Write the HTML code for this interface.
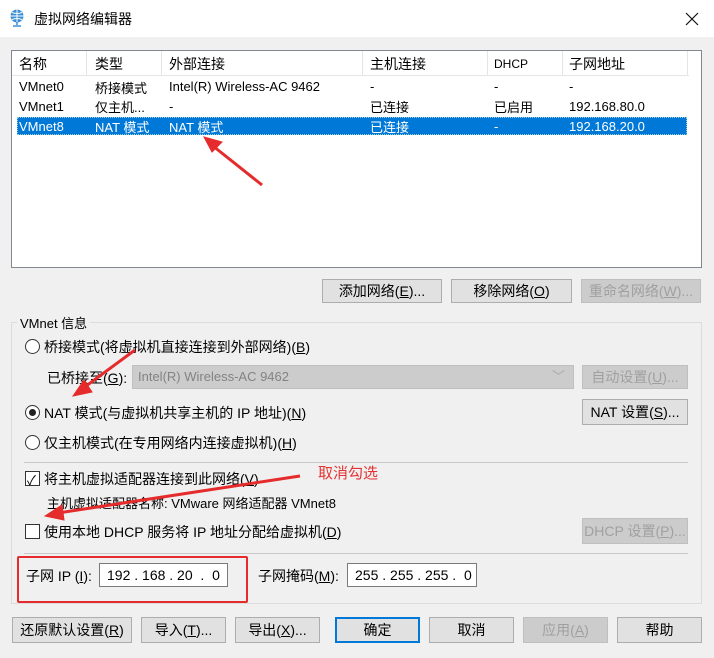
<!DOCTYPE html><html><head><meta charset="utf-8"><style>
body{margin:0;width:714px;height:658px;background:#f0f0f0;font-family:"Liberation Sans","Noto Sans CJK SC",sans-serif;font-size:13px;color:#000;position:relative;overflow:hidden}
.a{position:absolute;white-space:nowrap}
.btn{position:absolute;height:24px;background:#e1e1e1;border:1px solid #adadad;box-sizing:border-box;text-align:center;line-height:22px;font-size:14px}
.dis{color:#a0a0a0;background:#ccc;border-color:#bfbfbf}
.rad{position:absolute;width:13px;height:13px;border:1px solid #333;border-radius:50%;background:#fff}
.chk{position:absolute;width:13px;height:13px;border:1px solid #333;background:#fff}
.t{font-size:14px}
u{text-decoration:underline}
.inp{position:absolute;height:24px;background:#fff;border:1px solid #7a7a7a;box-sizing:border-box;line-height:22px;padding-left:7px;font-size:14px}
</style></head><body>
<div class="a" style="left:0;top:0;width:714px;height:37px;background:#fff"></div>
<svg class="a" style="left:9px;top:9px" width="16" height="18" viewBox="0 0 16 18"><circle cx="8" cy="7" r="6.5" fill="#3a8fd6"/><path d="M1.5 7h13M8 .5v13M3 3.5q5 2 10 0M3 10.5q5-2 10 0" stroke="#fff" stroke-width="1" fill="none"/><path d="M8 13v3M4 17h8" stroke="#3a8fd6" stroke-width="1.5"/></svg>
<div class="a t" style="left:34px;top:9px">虚拟网络编辑器</div>
<svg class="a" style="left:685px;top:12px" width="14" height="14"><path d="M1 1L13 13M13 1L1 13" stroke="#111" stroke-width="1.2"/></svg>
<div class="a" style="left:11px;top:50px;width:691px;height:218px;background:#fff;border:1px solid #828790;box-sizing:border-box"></div>
<div class="a" style="left:12px;top:51px;width:677px;height:24px;border-bottom:1px solid #e5e5e5"></div>
<div class="a" style="left:86px;top:51px;width:1px;height:24px;background:#e5e5e5"></div>
<div class="a" style="left:161px;top:51px;width:1px;height:24px;background:#e5e5e5"></div>
<div class="a" style="left:362px;top:51px;width:1px;height:24px;background:#e5e5e5"></div>
<div class="a" style="left:487px;top:51px;width:1px;height:24px;background:#e5e5e5"></div>
<div class="a" style="left:562px;top:51px;width:1px;height:24px;background:#e5e5e5"></div>
<div class="a" style="left:687px;top:51px;width:1px;height:24px;background:#e5e5e5"></div>
<div class="a t" style="left:19px;top:54px">名称</div><div class="a t" style="left:95px;top:54px">类型</div><div class="a t" style="left:169px;top:54px">外部连接</div><div class="a t" style="left:370px;top:54px">主机连接</div><div class="a" style="left:494px;top:57px;font-size:12px">DHCP</div><div class="a t" style="left:569px;top:54px">子网地址</div>
<div class="a" style="left:19px;top:79px">VMnet0</div><div class="a" style="left:95px;top:78px">桥接模式</div><div class="a" style="left:169px;top:79px">Intel(R) Wireless-AC 9462</div><div class="a" style="left:370px;top:79px">-</div><div class="a" style="left:494px;top:79px">-</div><div class="a" style="left:569px;top:79px">-</div>
<div class="a" style="left:19px;top:99px">VMnet1</div><div class="a" style="left:95px;top:97px">仅主机...</div><div class="a" style="left:169px;top:99px">-</div><div class="a" style="left:370px;top:97px">已连接</div><div class="a" style="left:494px;top:97px">已启用</div><div class="a" style="left:569px;top:99px">192.168.80.0</div>
<div class="a" style="left:17px;top:117px;width:670px;height:18px;background:#0078d7;border:1px dotted #9cc;box-sizing:border-box"></div>
<div class="a" style="left:19px;top:119px;color:#fff">VMnet8</div><div class="a" style="left:95px;top:117px;color:#fff">NAT 模式</div><div class="a" style="left:169px;top:117px;color:#fff">NAT 模式</div><div class="a" style="left:370px;top:117px;color:#fff">已连接</div><div class="a" style="left:494px;top:119px;color:#fff">-</div><div class="a" style="left:569px;top:119px;color:#fff">192.168.20.0</div>
<div class="btn" style="left:322px;top:279px;width:120px">添加网络(<u>E</u>)...</div>
<div class="btn" style="left:451px;top:279px;width:121px">移除网络(<u>O</u>)</div>
<div class="btn dis" style="left:581px;top:279px;width:120px">重命名网络(<u>W</u>)...</div>
<div class="a" style="left:11px;top:322px;width:691px;height:282px;border:1px solid #dcdcdc;box-sizing:border-box"></div>
<div class="a" style="left:17px;top:313px;background:#f0f0f0;padding:0 3px">VMnet 信息</div>
<div class="rad" style="left:25px;top:339px"></div><div class="a t" style="left:44px;top:337px">桥接模式(将虚拟机直接连接到外部网络)(<u>B</u>)</div>
<div class="a t" style="left:47px;top:368px">已桥接至(<u>G</u>):</div>
<div class="a" style="left:132px;top:365px;width:442px;height:24px;background:#ccc;border:1px solid #bfbfbf;box-sizing:border-box;color:#838383;line-height:22px;padding-left:5px">Intel(R) Wireless-AC 9462<span style="position:absolute;right:8px;color:#aaa">﹀</span></div>
<div class="btn dis" style="left:582px;top:365px;width:106px">自动设置(<u>U</u>)...</div>
<div class="rad" style="left:25px;top:405px"></div><div class="a" style="left:29px;top:409px;width:7px;height:7px;border-radius:50%;background:#222"></div><div class="a t" style="left:44px;top:403px">NAT 模式(与虚拟机共享主机的 IP 地址)(<u>N</u>)</div>
<div class="btn" style="left:582px;top:399px;width:106px;height:26px;line-height:24px">NAT 设置(<u>S</u>)...</div>
<div class="rad" style="left:25px;top:435px"></div><div class="a t" style="left:44px;top:433px">仅主机模式(在专用网络内连接虚拟机)(<u>H</u>)</div>
<div class="a" style="left:24px;top:462px;width:664px;height:1px;background:#c8c8c8"></div>
<div class="chk" style="left:25px;top:471px"></div><div class="a" style="left:27px;top:470px;font-size:13px">✓</div><div class="a t" style="left:44px;top:469px">将主机虚拟适配器连接到此网络(<u>V</u>)</div>
<div class="a" style="left:47px;top:493px">主机虚拟适配器名称: VMware 网络适配器 VMnet8</div>
<div class="chk" style="left:25px;top:524px"></div><div class="a t" style="left:44px;top:522px">使用本地 DHCP 服务将 IP 地址分配给虚拟机(<u>D</u>)</div>
<div class="btn dis" style="left:582px;top:518px;width:106px;height:26px;line-height:24px">DHCP 设置(<u>P</u>)...</div>
<div class="a" style="left:24px;top:553px;width:664px;height:1px;background:#c8c8c8"></div>
<div class="a t" style="left:26px;top:566px">子网 IP (<u>I</u>):</div>
<div class="inp" style="left:99px;top:563px;width:129px">192 . 168 . 20 &nbsp;. &nbsp;0</div>
<div class="a t" style="left:258px;top:566px">子网掩码(<u>M</u>):</div>
<div class="inp" style="left:347px;top:563px;width:130px">255 . 255 . 255 . &nbsp;0</div>
<div class="a" style="left:17px;top:556px;width:231px;height:47px;border:2px solid #e52b2b;box-sizing:border-box;border-radius:2px"></div>
<div class="a" style="left:318px;top:462px;color:#e53333;font-size:15px">取消勾选</div>
<div class="btn" style="left:12px;top:617px;width:120px;height:26px;line-height:24px">还原默认设置(<u>R</u>)</div>
<div class="btn" style="left:141px;top:617px;width:85px;height:26px;line-height:24px">导入(<u>T</u>)...</div>
<div class="btn" style="left:235px;top:617px;width:85px;height:26px;line-height:24px">导出(<u>X</u>)...</div>
<div class="btn" style="left:335px;top:617px;width:85px;height:26px;line-height:22px;border:2px solid #0078d7">确定</div>
<div class="btn" style="left:429px;top:617px;width:85px;height:26px;line-height:24px">取消</div>
<div class="btn dis" style="left:523px;top:617px;width:85px;height:26px;line-height:24px">应用(<u>A</u>)</div>
<div class="btn" style="left:617px;top:617px;width:85px;height:26px;line-height:24px">帮助</div>
<svg class="a" style="left:0;top:0" width="714" height="658"><g fill="#e52b2b" stroke="#e52b2b">
<path d="M262 185L213 146" stroke-width="3"/><path d="M204 137L222 142L212 152Z"/>
<path d="M135 350L82 389" stroke-width="3"/><path d="M73 396L84 380L92 392Z"/>
<path d="M300 476L58 513" stroke-width="3"/><path d="M45 516L62 505L64 520Z"/></g></svg>
</body></html>
